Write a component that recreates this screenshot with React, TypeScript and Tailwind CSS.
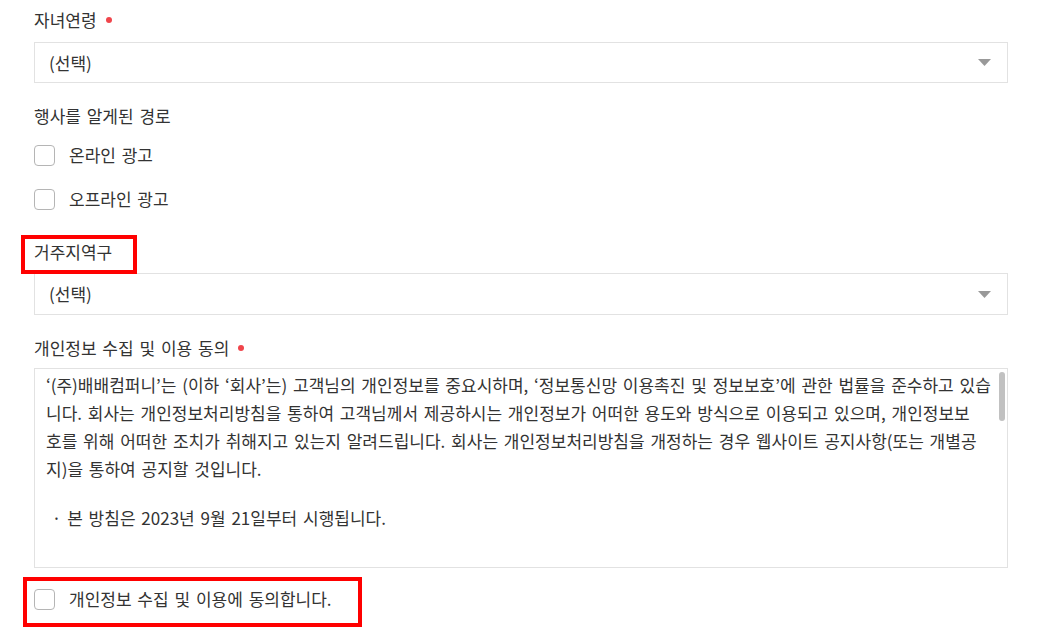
import React from 'react';

// ── Bits ──────────────────────────────────────────────────────────────────────

function Dot() {
  return <span className="ml-[9px] inline-block h-[6px] w-[6px] rounded-full bg-[#f0454b] align-middle" />;
}

function Label({ children, required }: { children: React.ReactNode; required?: boolean }) {
  return (
    <div className="flex h-6 items-center text-[17px] leading-6 text-[#333]">
      {children}
      {required && <Dot />}
    </div>
  );
}

function SelectBox({ h = 'h-[41px]' }: { h?: string }) {
  return (
    <div className={`flex ${h} items-center justify-between border border-[#e2e2e2] bg-white pl-[14px] pr-[16px] text-[17px] text-[#333]`}>
      <span>(선택)</span>
      <svg width="13" height="7" viewBox="0 0 13 7">
        <path d="M0 0h13L6.5 7z" fill="#999" />
      </svg>
    </div>
  );
}

function Check({ children }: { children: React.ReactNode }) {
  return (
    <div className="flex h-[22px] items-center">
      <span className="h-[21px] w-[21px] shrink-0 rounded-[4px] border border-[#b5b5b5] bg-white" />
      <span className="ml-[14px] text-[17px] leading-6 text-[#333]">{children}</span>
    </div>
  );
}

// policy text, wrapped the same way the original box wraps it
const POLICY = [
  '‘(주)배배컴퍼니’는 (이하 ‘회사’는) 고객님의 개인정보를 중요시하며, ‘정보통신망 이용촉진 및 정보보호’에 관한 법률을 준수하고 있습',
  '니다. 회사는 개인정보처리방침을 통하여 고객님께서 제공하시는 개인정보가 어떠한 용도와 방식으로 이용되고 있으며, 개인정보보',
  '호를 위해 어떠한 조치가 취해지고 있는지 알려드립니다. 회사는 개인정보처리방침을 개정하는 경우 웹사이트 공지사항(또는 개별공',
  '지)을 통하여 공지할 것입니다.',
];

// ── Page ──────────────────────────────────────────────────────────────────────

export default function App() {
  return (
    <div
      className="min-h-screen bg-white [word-spacing:2px]"
      style={{ fontFamily: '"Noto Sans CJK KR", "Noto Sans", sans-serif' }}
    >
      <div className="ml-[34px] w-[974px] pt-2">
        <Label required>자녀연령</Label>
        <div className="mt-[10px]">
          <SelectBox />
        </div>

        <div className="mt-[21px]">
          <Label>행사를 알게된 경로</Label>
        </div>
        <div className="mt-4">
          <Check>온라인 광고</Check>
        </div>
        <div className="mt-[22px]">
          <Check>오프라인 광고</Check>
        </div>

        <div className="relative mt-[30px]">
          <Label>거주지역구</Label>
          {/* annotation box */}
          <div className="pointer-events-none absolute left-[-13px] top-[-5px] h-[39px] w-[116px] border-4 border-[#ff0000]" />
        </div>
        <div className="mt-[9px]">
          <SelectBox h="h-[42px]" />
        </div>

        <div className="mt-[21px]">
          <Label required>개인정보 수집 및 이용 동의</Label>
        </div>
        <div className="mt-2 flex h-[200px] border border-[#e2e2e2] bg-white">
          <div className="flex-1 pl-[11px] pr-[2px] pt-[2px] text-[17px] leading-7 text-[#333]">
            <p>
              {POLICY.map((line, i) => (
                <React.Fragment key={i}>
                  {line}
                  {i < POLICY.length - 1 && <br />}
                </React.Fragment>
              ))}
            </p>
            <p className="mt-[21px]">&nbsp;· 본 방침은 2023년 9월 21일부터 시행됩니다.</p>
          </div>
          <div className="w-[8px] shrink-0 pt-[3px] pr-[1px]">
            <div className="h-[49px] w-[6px] rounded-full bg-[#c1c1c1]" />
          </div>
        </div>

        <div className="relative mt-5">
          <Check>개인정보 수집 및 이용에 동의합니다.</Check>
          {/* annotation box */}
          <div className="pointer-events-none absolute left-[-11px] top-[-11px] h-[50px] w-[339px] border-4 border-[#ff0000]" />
        </div>
      </div>
    </div>
  );
}
